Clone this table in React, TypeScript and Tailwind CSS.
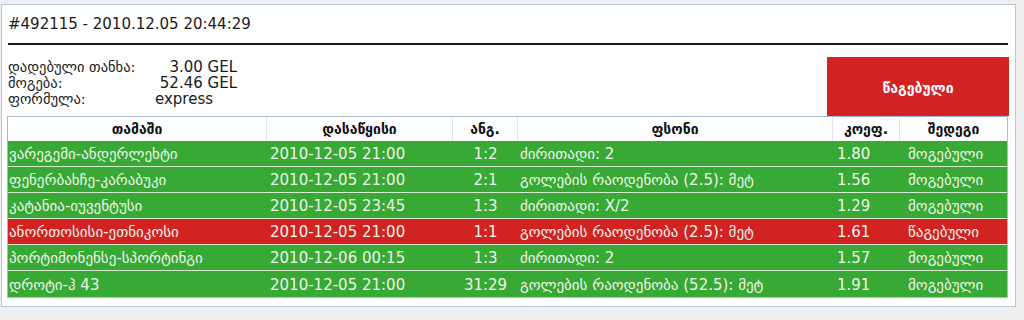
import React from "react";

type Bet = {
  match: string;
  start: string;
  score: string;
  pick: string;
  odds: string;
  won: boolean;
};

const bets: Bet[] = [
  { match: "ვარეგემი-ანდერლეხტი", start: "2010-12-05 21:00", score: "1:2", pick: "ძირითადი: 2", odds: "1.80", won: true },
  { match: "ფენერბახჩე-კარაბუკი", start: "2010-12-05 21:00", score: "2:1", pick: "გოლების რაოდენობა (2.5): მეტ", odds: "1.56", won: true },
  { match: "კატანია-იუვენტუსი", start: "2010-12-05 23:45", score: "1:3", pick: "ძირითადი: X/2", odds: "1.29", won: true },
  { match: "ანორთოსისი-ეთნიკოსი", start: "2010-12-05 21:00", score: "1:1", pick: "გოლების რაოდენობა (2.5): მეტ", odds: "1.61", won: false },
  { match: "პორტიმონენსე-სპორტინგი", start: "2010-12-06 00:15", score: "1:3", pick: "ძირითადი: 2", odds: "1.57", won: true },
  { match: "დროტი-ჰ 43", start: "2010-12-05 21:00", score: "31:29", pick: "გოლების რაოდენობა (52.5): მეტ", odds: "1.91", won: true },
];

const cols = "grid grid-cols-[259px_186px_65px_315px_67px_107px]";

export default function App() {
  return (
    <div className="min-h-[320px] bg-[#efefef] pt-1 pl-px pr-2 font-['DejaVu_Sans',sans-serif] text-[#111]">
      <div className="border border-[#b6c9e1] bg-white pb-2">
        {/* заголовок */}
        <div className="flex h-[38px] items-center pl-[6px] text-[15px] text-[#1a1a1a]">#492115 - 2010.12.05 20:44:29</div>
        <div className="ml-[6px] h-[2px] w-[1000px] bg-[#1c1c1c]" />

        {/* сводка */}
        <div className="flex h-[71px] items-end">
          <div className="self-start pt-[14px] pl-[6px] text-[14.5px] leading-4 text-[#1a1a1a]">
            <div className="flex">
              <span className="w-[147px]">დადებული თანხა:</span>
              <span className="w-[82px] text-right text-[15px]">3.00 GEL</span>
            </div>
            <div className="flex">
              <span className="w-[147px]">მოგება:</span>
              <span className="w-[82px] text-right text-[15px]">52.46 GEL</span>
            </div>
            <div className="flex">
              <span className="w-[147px]">ფორმულა:</span>
              <span className="w-[82px] text-[15px]">express</span>
            </div>
          </div>
          <div className="ml-auto mr-[6px] flex h-[59px] w-[182px] items-center justify-center bg-[#d22222] pt-[4px] text-[14px] font-bold text-white">
            წაგებული
          </div>
        </div>

        {/* ცხრილი */}
        <div className="ml-[5px] w-[1001px] border border-[#a9bdd5]">
          <div className={`${cols} h-[24px] bg-white text-[14px] font-bold`}>
            <div className="flex items-center justify-center border-r border-[#dfe5ec]">თამაში</div>
            <div className="flex items-center justify-center border-r border-[#dfe5ec]">დასაწყისი</div>
            <div className="flex items-center justify-center border-r border-[#dfe5ec]">ანგ.</div>
            <div className="flex items-center justify-center border-r border-[#dfe5ec]">ფსონი</div>
            <div className="flex items-center justify-center border-r border-[#dfe5ec]">კოეფ.</div>
            <div className="flex items-center justify-center">შედეგი</div>
          </div>
          {bets.map((b, i) => (
            <div
              key={i}
              className={`${cols} h-[26px] text-[15px] text-[#eef5ea] ${i < bets.length - 1 ? "border-b border-[#d6ebd2]" : ""} ${b.won ? "bg-[#38a934]" : "bg-[#d22222]"}`}
            >
              <div className="flex items-center pl-px pt-[2px]">{b.match}</div>
              <div className="flex items-center pl-[3px] pt-[2px]">{b.start}</div>
              <div className="flex items-center justify-center pt-[2px]">{b.score}</div>
              <div className="flex items-center pl-[2px] pt-[2px]">{b.pick}</div>
              <div className="flex items-center pl-[4px] pt-[2px]">{b.odds}</div>
              <div className="flex items-center pl-[8px] pt-[2px]">{b.won ? "მოგებული" : "წაგებული"}</div>
            </div>
          ))}
        </div>
      </div>
    </div>
  );
}
